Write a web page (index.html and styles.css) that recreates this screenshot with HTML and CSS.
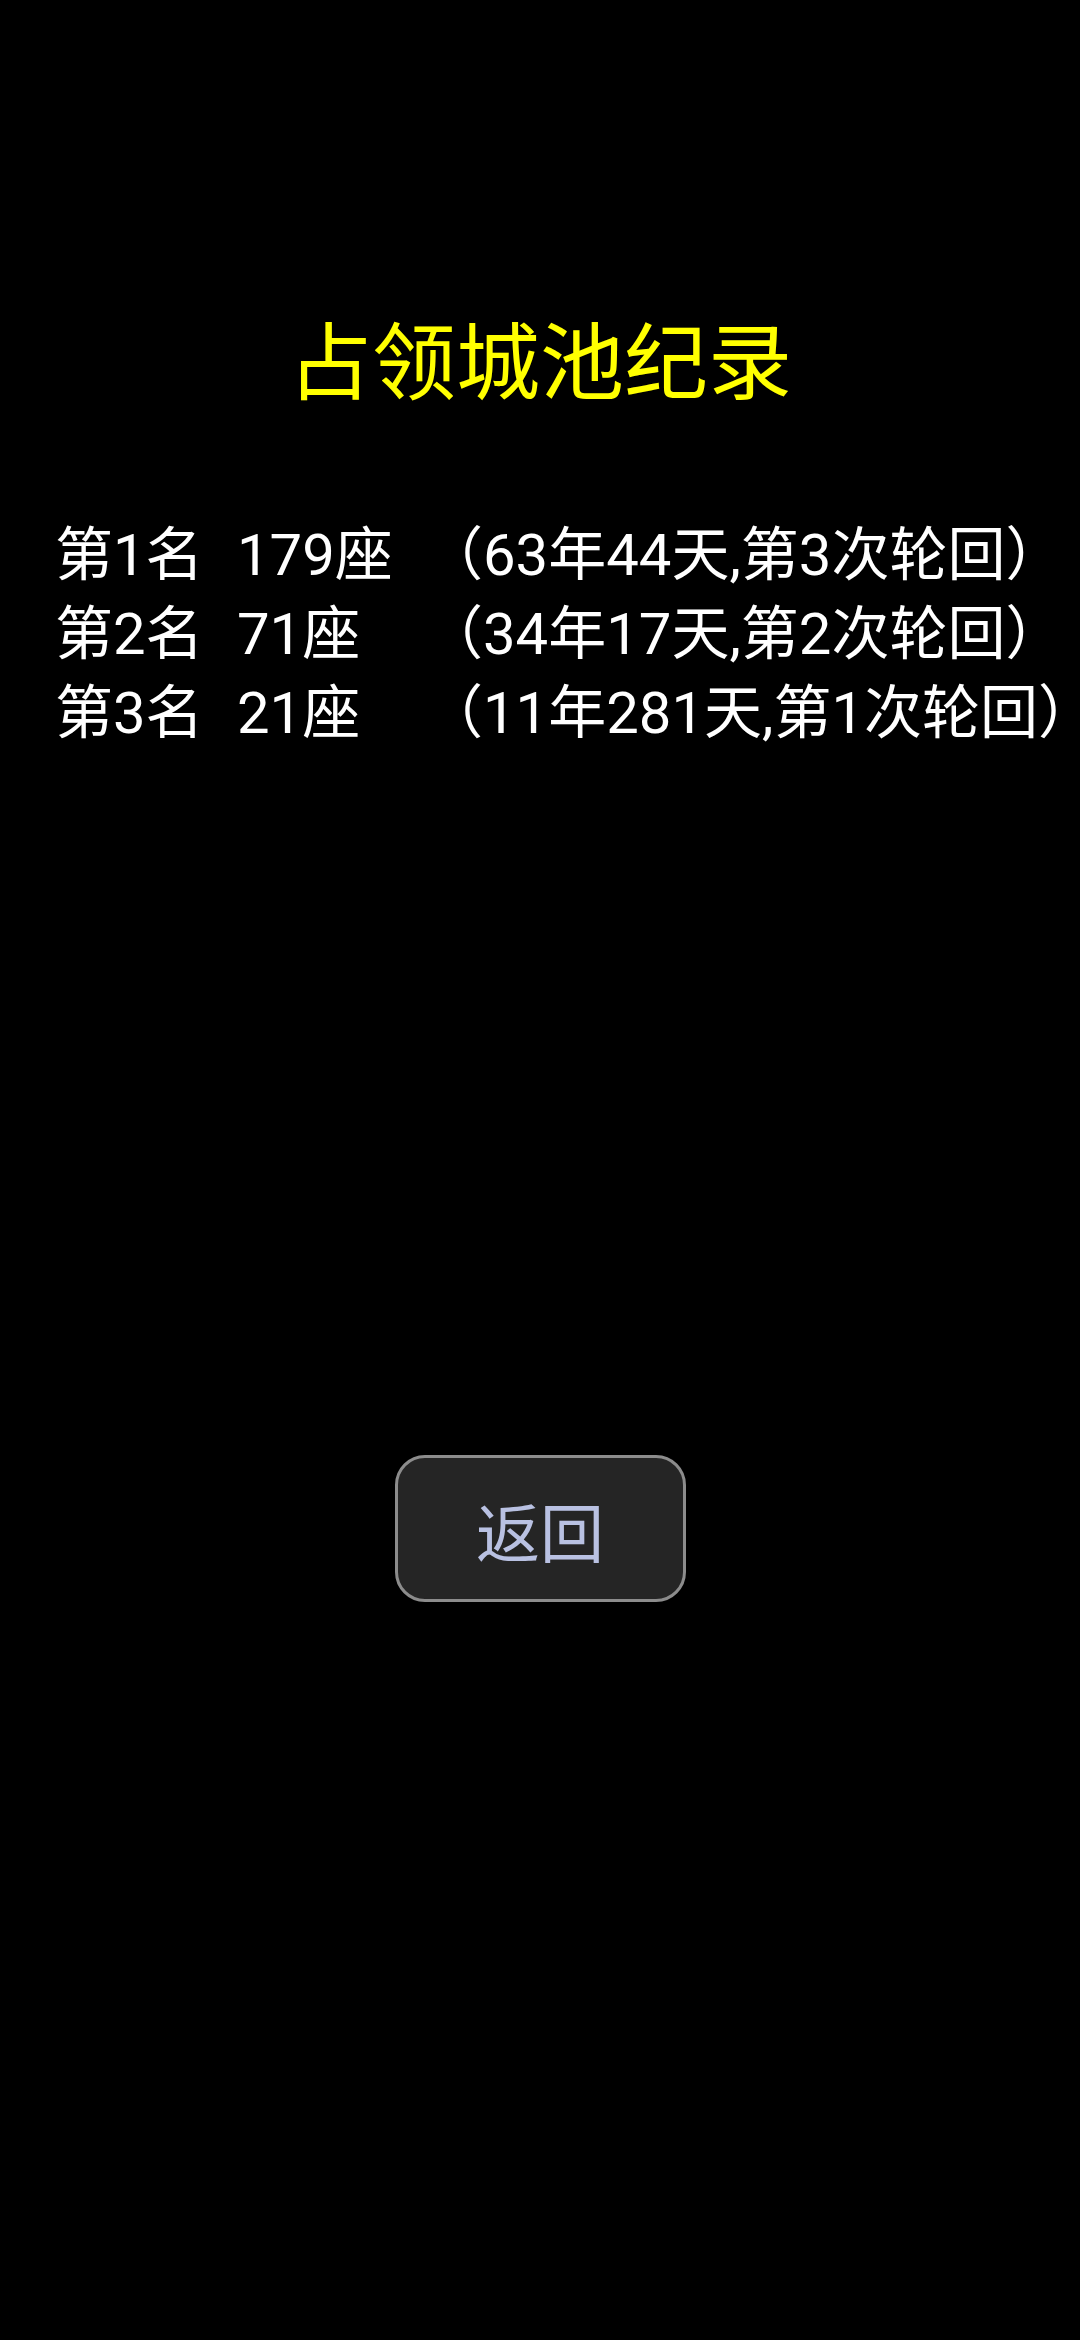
FILE: index.html
```html
<!DOCTYPE html>
<html lang="zh-CN">
<head>
<meta charset="utf-8">
<title>占领城池纪录</title>
<link rel="stylesheet" href="styles.css">
</head>
<body>
<main class="screen">
  <h1 class="title">占领城池纪录</h1>
  <div class="records">
    <div class="rec">
      <span class="rank">第1名</span><span class="count">179座</span><span class="detail">（63年44天,第3次轮回）</span>
    </div>
    <div class="rec">
      <span class="rank">第2名</span><span class="count">71座</span><span class="detail">（34年17天,第2次轮回）</span>
    </div>
    <div class="rec">
      <span class="rank">第3名</span><span class="count">21座</span><span class="detail">（11年281天,第1次轮回）</span>
    </div>
  </div>
  <div class="actions">
    <button class="back" type="button">返回</button>
  </div>
</main>
</body>
</html>
```

FILE: styles.css
```css
html, body {
  margin: 0;
  padding: 0;
  background: #000;
}

body {
  width: 1080px;
  height: 2340px;
  overflow: hidden;
}

.screen {
  display: flex;
  flex-direction: column;
  padding-top: 315px;
}

.title {
  margin: 0;
  text-align: center;
  font-family: "Noto Sans CJK SC", sans-serif;
  font-weight: 400;
  font-size: 84px;
  line-height: 84px;
  color: #ffff00;
}

.records {
  margin-top: 117px;
  padding-left: 55px;
  padding-right: 0;
  display: flex;
  flex-direction: column;
}

.rec {
  display: grid;
  grid-template-columns: 182px 188px max-content;
  font-family: Roboto, "Noto Sans CJK SC", sans-serif;
  font-size: 58px;
  line-height: 79px;
  color: #ffffff;
  white-space: nowrap;
}

.actions {
  display: flex;
  justify-content: center;
  margin-top: 702px;
}

.back {
  width: 291px;
  height: 147px;
  box-sizing: border-box;
  border: 3px solid #8c8c8c;
  border-radius: 30px;
  background: #252525;
  color: #b9c1e2;
  font-family: "Noto Sans CJK SC", sans-serif;
  font-size: 64px;
  line-height: 1;
  padding: 0;
  display: flex;
  align-items: center;
  justify-content: center;
}
```
